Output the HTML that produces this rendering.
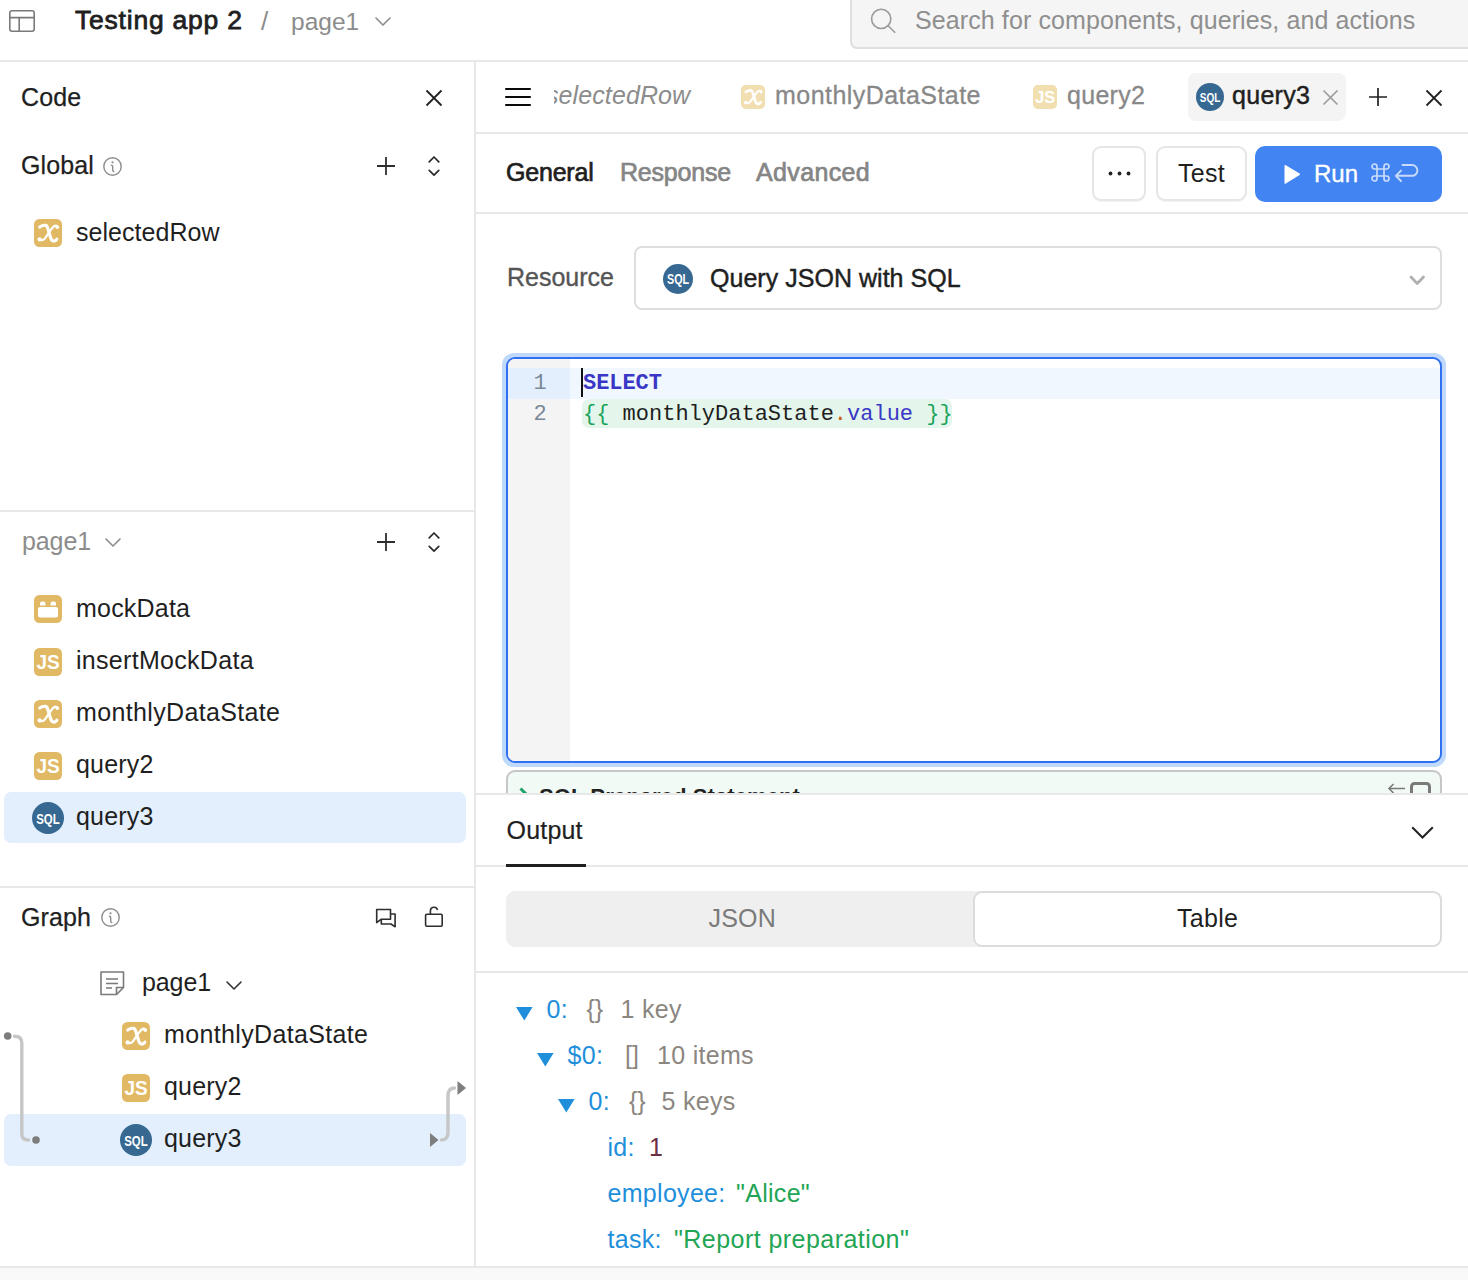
<!DOCTYPE html>
<html><head><meta charset="utf-8">
<style>
*{box-sizing:border-box;margin:0;padding:0}
html,body{width:1468px;height:1280px;overflow:hidden;background:#fff;font-family:"Liberation Sans",sans-serif;color:#1f1f1f}
.a{position:absolute;white-space:nowrap}
svg{position:absolute;overflow:visible}
</style></head>
<body>
<svg style="left:9px;top:10px;" width="26" height="22" viewBox="0 0 26 22"><rect x="0.8" y="0.8" width="24.4" height="20.4" rx="2.2" fill="none" stroke="#7a7a7a" stroke-width="1.6"/><path d="M1 7.6H25M10.2 7.6V21" stroke="#7a7a7a" stroke-width="1.6" fill="none"/></svg>
<div class="a" style="left:75px;top:4.31px;font-size:26.5px;line-height:33px;font-weight:400;color:#1f1f1f;letter-spacing:0.78px;font-family:'Liberation Sans',sans-serif;-webkit-text-stroke:0.8px #1f1f1f">Testing app 2</div>
<div class="a" style="left:261px;top:4.99px;font-size:26px;line-height:32px;font-weight:400;color:#8c8c8c;letter-spacing:0px;font-family:'Liberation Sans',sans-serif;">/</div>
<div class="a" style="left:291px;top:6.01px;font-size:24.5px;line-height:31px;font-weight:400;color:#8c8c8c;letter-spacing:0px;font-family:'Liberation Sans',sans-serif;">page1</div>
<svg style="left:375px;top:17px;" width="16" height="9" viewBox="0 0 16 9"><path d="M1 1L8.0 8L15 1" fill="none" stroke="#8c8c8c" stroke-width="1.6" stroke-linecap="round" stroke-linejoin="round"/></svg>
<div class="a" style="left:850px;top:-10px;width:640px;height:59px;background:#f5f5f5;border:2px solid #dfdfdf;border-radius:7px"></div>
<svg style="left:870px;top:7px;" width="28" height="28" viewBox="0 0 28 28"><circle cx="11.2" cy="11.9" r="9.6" fill="none" stroke="#9b9b9b" stroke-width="1.6"/><path d="M18.2 18.8L25.2 25.8" stroke="#9b9b9b" stroke-width="1.6"/></svg>
<div class="a" style="left:915px;top:4.83px;font-size:25px;line-height:31px;font-weight:400;color:#8f8f8f;letter-spacing:0.1px;font-family:'Liberation Sans',sans-serif;">Search for components, queries, and actions</div>
<div class="a" style="left:0px;top:60px;width:1468px;height:2px;background:#e8e8e8;"></div>
<div class="a" style="left:474px;top:62px;width:2px;height:1204px;background:#e8e8e8;"></div>
<div class="a" style="left:21px;top:81.83px;font-size:25px;line-height:31px;font-weight:400;color:#1f1f1f;letter-spacing:0.1px;font-family:'Liberation Sans',sans-serif;-webkit-text-stroke:0.25px #1f1f1f">Code</div>
<svg style="left:426.0px;top:90.0px;" width="16" height="16" viewBox="0 0 16 16"><path d="M0.5 0.5L15.5 15.5M15.5 0.5L0.5 15.5" stroke="#222" stroke-width="1.8"/></svg>
<div class="a" style="left:21px;top:149.83px;font-size:25px;line-height:31px;font-weight:400;color:#1f1f1f;letter-spacing:0.1px;font-family:'Liberation Sans',sans-serif;-webkit-text-stroke:0.25px #1f1f1f">Global</div>
<svg style="left:103.0px;top:156.5px;" width="19" height="19" viewBox="0 0 19 19"><circle cx="9.5" cy="9.5" r="8.7" fill="none" stroke="#8c8c8c" stroke-width="1.4"/><path d="M7.8 8.1Q9.7 7.9 9.7 10.1V13.1Q9.7 14.7 11.3 14.7" fill="none" stroke="#8c8c8c" stroke-width="1.4"/><circle cx="9.5" cy="5.3" r="1.1" fill="#8c8c8c"/></svg>
<svg style="left:377.0px;top:157.0px;" width="18" height="18" viewBox="0 0 18 18"><path d="M9.0 0V18M0 9.0H18" stroke="#2e2e2e" stroke-width="1.8"/></svg>
<svg style="left:428px;top:156px;" width="12" height="20" viewBox="0 0 12 20"><path d="M1.2 5.8L6 1L10.8 5.8M1.2 14.4L6 19.2L10.8 14.4" fill="none" stroke="#2a2a2a" stroke-width="1.7" stroke-linecap="round" stroke-linejoin="round"/></svg>
<svg style="left:34px;top:219px;" width="28" height="28" viewBox="0 0 28 28"><g transform="scale(1.0)"><rect width="28" height="28" rx="5.5" fill="#e1b964"/><path d="M5.8 8Q8.6 6 11.6 6.3Q13.1 6.7 13.9 9.6L16.6 18.6Q17.6 22.4 20.6 22Q22 21.6 22.8 20.2" fill="none" stroke="#fff" stroke-width="3.2" stroke-linecap="round" stroke-linejoin="round"/><path d="M23.6 7.6Q22 5.6 19.8 7.4Q18.4 8.6 16.6 11.2L11 19.4Q9.2 21.8 5.6 21" fill="none" stroke="#fff" stroke-width="2.3" stroke-linecap="round"/><circle cx="23.3" cy="8.2" r="1.8" fill="#fff"/><circle cx="5.6" cy="20.4" r="2.1" fill="#fff"/></g></svg>
<div class="a" style="left:76px;top:216.83px;font-size:25px;line-height:31px;font-weight:400;color:#1f1f1f;letter-spacing:0.05px;font-family:'Liberation Sans',sans-serif;">selectedRow</div>
<div class="a" style="left:0px;top:510px;width:474px;height:2px;background:#e8e8e8;"></div>
<div class="a" style="left:22px;top:525.83px;font-size:25px;line-height:31px;font-weight:400;color:#8c8c8c;letter-spacing:-0.1px;font-family:'Liberation Sans',sans-serif;">page1</div>
<svg style="left:105px;top:538px;" width="16" height="9" viewBox="0 0 16 9"><path d="M1 1L8.0 8L15 1" fill="none" stroke="#8c8c8c" stroke-width="1.6" stroke-linecap="round" stroke-linejoin="round"/></svg>
<svg style="left:377.0px;top:533.0px;" width="18" height="18" viewBox="0 0 18 18"><path d="M9.0 0V18M0 9.0H18" stroke="#2e2e2e" stroke-width="1.8"/></svg>
<svg style="left:428px;top:532px;" width="12" height="20" viewBox="0 0 12 20"><path d="M1.2 5.8L6 1L10.8 5.8M1.2 14.4L6 19.2L10.8 14.4" fill="none" stroke="#2a2a2a" stroke-width="1.7" stroke-linecap="round" stroke-linejoin="round"/></svg>
<svg style="left:34px;top:595px;" width="28" height="28" viewBox="0 0 28 28"><rect width="28" height="28" rx="5.5" fill="#e1b964"/><rect x="4" y="12" width="20" height="10.5" rx="2" fill="#fff"/><path d="M6 10.5V8.5A2 2 0 0 1 8 6.5H9.5A2 2 0 0 1 11.5 8.5V10.5Z M16.5 10.5V8.5A2 2 0 0 1 18.5 6.5H20A2 2 0 0 1 22 8.5V10.5Z" fill="#fff"/></svg>
<div class="a" style="left:76px;top:592.83px;font-size:25px;line-height:31px;font-weight:400;color:#1f1f1f;letter-spacing:0.2px;font-family:'Liberation Sans',sans-serif;">mockData</div>
<svg style="left:34px;top:648px;" width="28" height="28" viewBox="0 0 28 28"><g transform="scale(1.0)"><rect width="28" height="28" rx="5.5" fill="#e1b964"/><text x="14.1" y="20.8" text-anchor="middle" font-family="Liberation Sans" font-weight="bold" font-size="19.5" fill="#fff" textLength="23.2" lengthAdjust="spacingAndGlyphs">JS</text></g></svg>
<div class="a" style="left:76px;top:644.83px;font-size:25px;line-height:31px;font-weight:400;color:#1f1f1f;letter-spacing:0.3px;font-family:'Liberation Sans',sans-serif;">insertMockData</div>
<svg style="left:34px;top:700px;" width="28" height="28" viewBox="0 0 28 28"><g transform="scale(1.0)"><rect width="28" height="28" rx="5.5" fill="#e1b964"/><path d="M5.8 8Q8.6 6 11.6 6.3Q13.1 6.7 13.9 9.6L16.6 18.6Q17.6 22.4 20.6 22Q22 21.6 22.8 20.2" fill="none" stroke="#fff" stroke-width="3.2" stroke-linecap="round" stroke-linejoin="round"/><path d="M23.6 7.6Q22 5.6 19.8 7.4Q18.4 8.6 16.6 11.2L11 19.4Q9.2 21.8 5.6 21" fill="none" stroke="#fff" stroke-width="2.3" stroke-linecap="round"/><circle cx="23.3" cy="8.2" r="1.8" fill="#fff"/><circle cx="5.6" cy="20.4" r="2.1" fill="#fff"/></g></svg>
<div class="a" style="left:76px;top:697.33px;font-size:25px;line-height:31px;font-weight:400;color:#1f1f1f;letter-spacing:0.35px;font-family:'Liberation Sans',sans-serif;">monthlyDataState</div>
<svg style="left:34px;top:752px;" width="28" height="28" viewBox="0 0 28 28"><g transform="scale(1.0)"><rect width="28" height="28" rx="5.5" fill="#e1b964"/><text x="14.1" y="20.8" text-anchor="middle" font-family="Liberation Sans" font-weight="bold" font-size="19.5" fill="#fff" textLength="23.2" lengthAdjust="spacingAndGlyphs">JS</text></g></svg>
<div class="a" style="left:76px;top:748.83px;font-size:25px;line-height:31px;font-weight:400;color:#1f1f1f;letter-spacing:0.2px;font-family:'Liberation Sans',sans-serif;">query2</div>
<div class="a" style="left:4px;top:792px;width:462px;height:51px;background:#e3effd;border-radius:7px"></div>
<svg style="left:32.0px;top:802.0px;" width="32" height="32" viewBox="0 0 32 32"><g transform="scale(1.0)"><circle cx="16" cy="16" r="16" fill="#376892"/><text x="16" y="21.6" text-anchor="middle" font-family="Liberation Sans" font-weight="bold" font-size="15.5" fill="#fff" textLength="23.5" lengthAdjust="spacingAndGlyphs">SQL</text></g></svg>
<div class="a" style="left:76px;top:801.33px;font-size:25px;line-height:31px;font-weight:400;color:#1f1f1f;letter-spacing:0.2px;font-family:'Liberation Sans',sans-serif;">query3</div>
<div class="a" style="left:0px;top:886px;width:474px;height:2px;background:#e8e8e8;"></div>
<div class="a" style="left:21px;top:901.83px;font-size:25px;line-height:31px;font-weight:400;color:#1f1f1f;letter-spacing:0.1px;font-family:'Liberation Sans',sans-serif;-webkit-text-stroke:0.25px #1f1f1f">Graph</div>
<svg style="left:100.5px;top:908.0px;" width="19" height="19" viewBox="0 0 19 19"><circle cx="9.5" cy="9.5" r="8.7" fill="none" stroke="#8c8c8c" stroke-width="1.4"/><path d="M7.8 8.1Q9.7 7.9 9.7 10.1V13.1Q9.7 14.7 11.3 14.7" fill="none" stroke="#8c8c8c" stroke-width="1.4"/><circle cx="9.5" cy="5.3" r="1.1" fill="#8c8c8c"/></svg>
<svg style="left:370px;top:900px;" width="30" height="30" viewBox="0 0 30 30"><path d="M6.7 9.5H20.5V19.3H11L6.7 22.6Z" fill="none" stroke="#2e2e2e" stroke-width="1.6" stroke-linejoin="round"/><path d="M20.5 14H25.1V26.8L21 24H11.3V19.3" fill="none" stroke="#2e2e2e" stroke-width="1.6" stroke-linejoin="round"/></svg>
<svg style="left:420px;top:900px;" width="30" height="30" viewBox="0 0 30 30"><rect x="5.6" y="14.2" width="16.6" height="12" rx="1.2" fill="none" stroke="#2e2e2e" stroke-width="1.6"/><path d="M10.4 14.2V10.8A3.6 3.6 0 0 1 17.5 10" fill="none" stroke="#2e2e2e" stroke-width="1.6"/></svg>
<svg style="left:100px;top:971px;" width="25" height="25" viewBox="0 0 25 25"><path d="M1 1H23.5V16.5L16.5 23.5H1Z" fill="none" stroke="#7a7a7a" stroke-width="1.6" stroke-linejoin="round"/><path d="M16.5 23.5V16.5H23.5" fill="none" stroke="#7a7a7a" stroke-width="1.6"/><path d="M6 8H18M6 12.5H18M6 17H12" stroke="#7a7a7a" stroke-width="1.5"/></svg>
<div class="a" style="left:142px;top:967.33px;font-size:25px;line-height:31px;font-weight:400;color:#1f1f1f;letter-spacing:-0.1px;font-family:'Liberation Sans',sans-serif;">page1</div>
<svg style="left:226px;top:981px;" width="16" height="9" viewBox="0 0 16 9"><path d="M1 1L8.0 8L15 1" fill="none" stroke="#333" stroke-width="1.6" stroke-linecap="round" stroke-linejoin="round"/></svg>
<svg style="left:122px;top:1022px;" width="28" height="28" viewBox="0 0 28 28"><g transform="scale(1.0)"><rect width="28" height="28" rx="5.5" fill="#e1b964"/><path d="M5.8 8Q8.6 6 11.6 6.3Q13.1 6.7 13.9 9.6L16.6 18.6Q17.6 22.4 20.6 22Q22 21.6 22.8 20.2" fill="none" stroke="#fff" stroke-width="3.2" stroke-linecap="round" stroke-linejoin="round"/><path d="M23.6 7.6Q22 5.6 19.8 7.4Q18.4 8.6 16.6 11.2L11 19.4Q9.2 21.8 5.6 21" fill="none" stroke="#fff" stroke-width="2.3" stroke-linecap="round"/><circle cx="23.3" cy="8.2" r="1.8" fill="#fff"/><circle cx="5.6" cy="20.4" r="2.1" fill="#fff"/></g></svg>
<div class="a" style="left:164px;top:1019.33px;font-size:25px;line-height:31px;font-weight:400;color:#1f1f1f;letter-spacing:0.35px;font-family:'Liberation Sans',sans-serif;">monthlyDataState</div>
<svg style="left:122px;top:1074px;" width="28" height="28" viewBox="0 0 28 28"><g transform="scale(1.0)"><rect width="28" height="28" rx="5.5" fill="#e1b964"/><text x="14.1" y="20.8" text-anchor="middle" font-family="Liberation Sans" font-weight="bold" font-size="19.5" fill="#fff" textLength="23.2" lengthAdjust="spacingAndGlyphs">JS</text></g></svg>
<div class="a" style="left:164px;top:1070.83px;font-size:25px;line-height:31px;font-weight:400;color:#1f1f1f;letter-spacing:0.2px;font-family:'Liberation Sans',sans-serif;">query2</div>
<div class="a" style="left:4px;top:1114px;width:462px;height:52px;background:#e3effd;border-radius:7px"></div>
<svg style="left:120.0px;top:1124.0px;" width="32" height="32" viewBox="0 0 32 32"><g transform="scale(1.0)"><circle cx="16" cy="16" r="16" fill="#376892"/><text x="16" y="21.6" text-anchor="middle" font-family="Liberation Sans" font-weight="bold" font-size="15.5" fill="#fff" textLength="23.5" lengthAdjust="spacingAndGlyphs">SQL</text></g></svg>
<div class="a" style="left:164px;top:1122.83px;font-size:25px;line-height:31px;font-weight:400;color:#1f1f1f;letter-spacing:0.2px;font-family:'Liberation Sans',sans-serif;">query3</div>
<svg style="left:0px;top:1028px;" width="50" height="120" viewBox="0 0 50 120"><circle cx="7.7" cy="8" r="3.8" fill="#7d7d7d"/><path d="M14.5 8.3Q21.8 8.3 21.8 15V106Q21.8 112 28.5 112" fill="none" stroke="#c6c6c6" stroke-width="3.4" stroke-linecap="round"/><circle cx="36" cy="112" r="3.8" fill="#7d7d7d"/></svg>
<svg style="left:428px;top:1078px;" width="40" height="72" viewBox="0 0 40 72"><path d="M457.5 1081L466 1088L457.5 1095Z" transform="translate(-428 -1078)" fill="#7d7d7d"/><path d="M430 1133L438.5 1140L430 1147Z" transform="translate(-428 -1078)" fill="#7d7d7d"/><path d="M454.5 1088Q448 1088 448 1096V1132Q448 1140 441.5 1140" transform="translate(-428 -1078)" fill="none" stroke="#c6c6c6" stroke-width="3.4" stroke-linecap="round"/></svg>
<div class="a" style="left:0px;top:1266px;width:1468px;height:2px;background:#e8e8e8;"></div>
<div class="a" style="left:0px;top:1268px;width:1468px;height:12px;background:#f9f9f9;"></div>
<svg style="left:506px;top:87px;" width="24" height="20" viewBox="0 0 24 20"><path d="M0 2H24M0 10H24M0 18H24" stroke="#0a0a0a" stroke-width="2.1" stroke-linecap="round"/></svg>
<div class="a" style="left:554px;top:62px;width:160px;height:70px;overflow:hidden">
<div class="a" style="left:-8px;top:17.63px;font-size:25px;line-height:31px;font-weight:400;color:#8c8c8c;letter-spacing:0.1px;font-family:'Liberation Sans',sans-serif;font-style:italic">selectedRow</div>
</div>
<svg style="left:741px;top:85px;" width="24" height="24" viewBox="0 0 24 24"><g transform="scale(0.8571428571428571)"><rect width="28" height="28" rx="5.5" fill="#f1dfb2"/><path d="M5.8 8Q8.6 6 11.6 6.3Q13.1 6.7 13.9 9.6L16.6 18.6Q17.6 22.4 20.6 22Q22 21.6 22.8 20.2" fill="none" stroke="#fff" stroke-width="3.2" stroke-linecap="round" stroke-linejoin="round"/><path d="M23.6 7.6Q22 5.6 19.8 7.4Q18.4 8.6 16.6 11.2L11 19.4Q9.2 21.8 5.6 21" fill="none" stroke="#fff" stroke-width="2.3" stroke-linecap="round"/><circle cx="23.3" cy="8.2" r="1.8" fill="#fff"/><circle cx="5.6" cy="20.4" r="2.1" fill="#fff"/></g></svg>
<div class="a" style="left:775px;top:80.33px;font-size:25px;line-height:31px;font-weight:400;color:#888;letter-spacing:0.45px;font-family:'Liberation Sans',sans-serif;-webkit-text-stroke:0.3px #888">monthlyDataState</div>
<svg style="left:1033px;top:85px;" width="24" height="24" viewBox="0 0 24 24"><g transform="scale(0.8571428571428571)"><rect width="28" height="28" rx="5.5" fill="#f1dfb2"/><text x="14.1" y="20.8" text-anchor="middle" font-family="Liberation Sans" font-weight="bold" font-size="19.5" fill="#fff" textLength="23.2" lengthAdjust="spacingAndGlyphs">JS</text></g></svg>
<div class="a" style="left:1067px;top:80.33px;font-size:25px;line-height:31px;font-weight:400;color:#888;letter-spacing:0.3px;font-family:'Liberation Sans',sans-serif;-webkit-text-stroke:0.3px #888">query2</div>
<div class="a" style="left:1188px;top:73px;width:158px;height:48px;background:#f4f4f4;border-radius:8px"></div>
<svg style="left:1196.0px;top:83.0px;" width="28" height="28" viewBox="0 0 28 28"><g transform="scale(0.875)"><circle cx="16" cy="16" r="16" fill="#376892"/><text x="16" y="21.6" text-anchor="middle" font-family="Liberation Sans" font-weight="bold" font-size="15.5" fill="#fff" textLength="23.5" lengthAdjust="spacingAndGlyphs">SQL</text></g></svg>
<div class="a" style="left:1232px;top:80.33px;font-size:25px;line-height:31px;font-weight:400;color:#1f1f1f;letter-spacing:0.3px;font-family:'Liberation Sans',sans-serif;-webkit-text-stroke:0.45px #1f1f1f">query3</div>
<svg style="left:1322.5px;top:90.0px;" width="15" height="15" viewBox="0 0 15 15"><path d="M0.5 0.5L14.5 14.5M14.5 0.5L0.5 14.5" stroke="#9a9a9a" stroke-width="1.6"/></svg>
<svg style="left:1369.0px;top:88.0px;" width="18" height="18" viewBox="0 0 18 18"><path d="M9.0 0V18M0 9.0H18" stroke="#222" stroke-width="1.7"/></svg>
<svg style="left:1426.0px;top:89.5px;" width="16" height="16" viewBox="0 0 16 16"><path d="M0.5 0.5L15.5 15.5M15.5 0.5L0.5 15.5" stroke="#222" stroke-width="1.8"/></svg>
<div class="a" style="left:476px;top:132px;width:992px;height:2px;background:#e8e8e8;"></div>
<div class="a" style="left:506px;top:156.83px;font-size:25px;line-height:31px;font-weight:400;color:#1f1f1f;letter-spacing:-0.2px;font-family:'Liberation Sans',sans-serif;-webkit-text-stroke:0.7px #1f1f1f">General</div>
<div class="a" style="left:620px;top:156.83px;font-size:25px;line-height:31px;font-weight:400;color:#858585;letter-spacing:-0.2px;font-family:'Liberation Sans',sans-serif;-webkit-text-stroke:0.7px #858585">Response</div>
<div class="a" style="left:756px;top:156.83px;font-size:25px;line-height:31px;font-weight:400;color:#858585;letter-spacing:0.35px;font-family:'Liberation Sans',sans-serif;-webkit-text-stroke:0.7px #858585">Advanced</div>
<div class="a" style="left:1092px;top:146px;width:54px;height:55px;background:#fff;border:2px solid #e6e6e6;border-radius:9px;box-shadow:0 1px 1px rgba(0,0,0,0.05)"></div>
<svg style="left:1108px;top:171px;" width="24" height="5" viewBox="0 0 24 5"><circle cx="2.5" cy="2.5" r="1.9" fill="#222"/><circle cx="11.5" cy="2.5" r="1.9" fill="#222"/><circle cx="20.5" cy="2.5" r="1.9" fill="#222"/></svg>
<div class="a" style="left:1156px;top:146px;width:91px;height:55px;background:#fff;border:2px solid #e6e6e6;border-radius:9px;box-shadow:0 1px 1px rgba(0,0,0,0.05)"></div>
<div class="a" style="left:1178px;top:157.83px;font-size:25px;line-height:31px;font-weight:400;color:#1f1f1f;letter-spacing:0.3px;font-family:'Liberation Sans',sans-serif;">Test</div>
<div class="a" style="left:1255px;top:146px;width:187px;height:56px;background:#4285f2;border-radius:10px"></div>
<svg style="left:1283px;top:164px;" width="18" height="21" viewBox="0 0 18 21"><path d="M1.5 1.8Q1.5 0.5 2.8 1.2L16.6 9.4Q17.6 10.2 16.6 11L2.8 19.6Q1.5 20.3 1.5 19Z" fill="#fff"/></svg>
<div class="a" style="left:1314px;top:158.68px;font-size:24px;line-height:30px;font-weight:400;color:#fff;letter-spacing:0px;font-family:'Liberation Sans',sans-serif;-webkit-text-stroke:0.35px #fff">Run</div>
<svg style="left:1371px;top:163px;" width="19" height="19" viewBox="0 0 19 19"><path d="M6 6H13V13H6ZM6 6V3.5A2.5 2.5 0 1 0 3.5 6H6M13 6V3.5A2.5 2.5 0 1 1 15.5 6H13M13 13V15.5A2.5 2.5 0 1 0 15.5 13H13M6 13V15.5A2.5 2.5 0 1 1 3.5 13H6" fill="none" stroke="#c9dbfb" stroke-width="1.7"/></svg>
<svg style="left:1393px;top:162px;" width="28" height="24" viewBox="0 0 28 24"><path d="M3 13.8H19A5.4 5.4 0 0 0 19 3H9.5M8 8.6L2.8 13.8L8 19" fill="none" stroke="#c9dbfb" stroke-width="1.9" stroke-linecap="round" stroke-linejoin="round"/></svg>
<div class="a" style="left:476px;top:212px;width:992px;height:2px;background:#e8e8e8;"></div>
<div class="a" style="left:507px;top:261.83px;font-size:25px;line-height:31px;font-weight:400;color:#555;letter-spacing:0px;font-family:'Liberation Sans',sans-serif;-webkit-text-stroke:0.35px #555">Resource</div>
<div class="a" style="left:634px;top:246px;width:808px;height:64px;background:#fff;border:2px solid #dedede;border-radius:8px"></div>
<svg style="left:663.0px;top:264.0px;" width="30" height="30" viewBox="0 0 30 30"><g transform="scale(0.9375)"><circle cx="16" cy="16" r="16" fill="#376892"/><text x="16" y="21.6" text-anchor="middle" font-family="Liberation Sans" font-weight="bold" font-size="15.5" fill="#fff" textLength="23.5" lengthAdjust="spacingAndGlyphs">SQL</text></g></svg>
<div class="a" style="left:710px;top:262.83px;font-size:25px;line-height:31px;font-weight:400;color:#1f1f1f;letter-spacing:0.03px;font-family:'Liberation Sans',sans-serif;-webkit-text-stroke:0.45px #1f1f1f">Query JSON with SQL</div>
<svg style="left:1409.5px;top:276px;" width="14.5" height="8.5" viewBox="0 0 14.5 8.5"><path d="M1 1L7.25 7.5L13.5 1" fill="none" stroke="#b0b0b0" stroke-width="2.8" stroke-linecap="round" stroke-linejoin="round"/></svg>
<div class="a" style="left:502px;top:353px;width:944px;height:414px;background:#bfd9fb;border-radius:12px"></div>
<div class="a" style="left:506px;top:357px;width:936px;height:406px;background:#fff;border:2px solid #2f6ff0;border-radius:9px;overflow:hidden"></div>
<div class="a" style="left:508px;top:359px;width:62px;height:402px;background:#f4f4f4;border-bottom-left-radius:7px;border-top-left-radius:7px"></div>
<div class="a" style="left:508px;top:368px;width:62px;height:31px;background:#e3effd;"></div>
<div class="a" style="left:570px;top:368px;width:870px;height:31px;background:#f0f7fe;"></div>
<div class="a" style="left:533.5px;top:370.15px;font-size:22px;line-height:28px;font-weight:400;color:#7a8898;letter-spacing:0px;font-family:'Liberation Mono',sans-serif;">1</div>
<div class="a" style="left:533.5px;top:401.15px;font-size:22px;line-height:28px;font-weight:400;color:#7a8898;letter-spacing:0px;font-family:'Liberation Mono',sans-serif;">2</div>
<div class="a" style="left:581px;top:368px;width:2px;height:29px;background:#111;"></div>
<div class="a" style="left:583px;top:370.15px;font-size:22px;line-height:28px;font-weight:700;color:#3a37c6;letter-spacing:-0.05px;font-family:'Liberation Mono',sans-serif;">SELECT</div>
<div class="a" style="left:582px;top:399px;width:370px;height:29px;background:#e4f6eb;border-radius:7px"></div>
<div class="a" style="left:583px;top:401.15px;font-size:22px;line-height:28px;font-weight:400;color:#1f1f1f;letter-spacing:0px;font-family:'Liberation Mono',sans-serif;"><span style="color:#1ba35a">{{</span> monthlyDataState<span style="color:#c55a11">.</span><span style="color:#3a37c6">value</span> <span style="color:#1ba35a">}}</span></div>
<div class="a" style="left:476px;top:760px;width:992px;height:33px;overflow:hidden">
<div class="a" style="left:30px;top:10px;width:936px;height:60px;background:#f2faf5;border:2px solid #c6c6c6;border-radius:9px"></div>
<svg style="left:43px;top:27px;" width="10" height="16" viewBox="0 0 10 16"><path d="M1.5 1.5L8 8L1.5 14.5" fill="none" stroke="#22a06b" stroke-width="3"/></svg>
<div class="a" style="left:63px;top:23.10px;font-size:22.2px;line-height:28px;font-weight:700;color:#222;letter-spacing:0px;font-family:'Liberation Sans',sans-serif;">SQL Prepared Statement</div>
<svg style="left:911px;top:17px;" width="50" height="30" viewBox="0 0 50 30"><path d="M2 11.5H18M6.5 7L2 11.5L6.5 16" fill="none" stroke="#7a7a7a" stroke-width="1.6"/><rect x="24.5" y="6.5" width="18" height="16" rx="3" fill="none" stroke="#7a7a7a" stroke-width="3"/><path d="M28 4.5H41A3 3 0 0 1 44 7.5V10" fill="none" stroke="#7a7a7a" stroke-width="0"/></svg>
</div>
<div class="a" style="left:476px;top:793px;width:992px;height:2px;background:#e8e8e8;"></div>
<div class="a" style="left:506.5px;top:814.83px;font-size:25px;line-height:31px;font-weight:400;color:#1f1f1f;letter-spacing:0.2px;font-family:'Liberation Sans',sans-serif;-webkit-text-stroke:0.2px #1f1f1f">Output</div>
<svg style="left:1411px;top:826px;" width="23" height="13" viewBox="0 0 23 13"><path d="M1.2 1.2L11.5 11.5L21.8 1.2" fill="none" stroke="#222" stroke-width="2"/></svg>
<div class="a" style="left:476px;top:865px;width:992px;height:2px;background:#e8e8e8;"></div>
<div class="a" style="left:506px;top:864px;width:80px;height:3px;background:#1f1f1f;"></div>
<div class="a" style="left:506px;top:891px;width:936px;height:56px;background:#efefef;border-radius:9px"></div>
<div class="a" style="left:708.5px;top:902.83px;font-size:25px;line-height:31px;font-weight:400;color:#7a7a7a;letter-spacing:0.2px;font-family:'Liberation Sans',sans-serif;">JSON</div>
<div class="a" style="left:973px;top:891px;width:469px;height:56px;background:#fff;border:2px solid #dcdcdc;border-radius:9px"></div>
<div class="a" style="left:1177px;top:902.83px;font-size:25px;line-height:31px;font-weight:400;color:#1f1f1f;letter-spacing:0.3px;font-family:'Liberation Sans',sans-serif;">Table</div>
<div class="a" style="left:476px;top:971px;width:992px;height:2px;background:#e8e8e8;"></div>
<svg style="left:516px;top:1007px;" width="17" height="14" viewBox="0 0 17 14"><path d="M0 0H16.6L8.3 13.6Z" fill="#1f8fdb"/></svg>
<div class="a" style="left:546.5px;top:994.43px;font-size:25px;line-height:31px;font-weight:400;color:#1f8fdb;letter-spacing:0.3px;font-family:'Liberation Sans',sans-serif;">0:</div>
<div class="a" style="left:586.5px;top:994.43px;font-size:25px;line-height:31px;font-weight:400;color:#8b8680;letter-spacing:0px;font-family:'Liberation Sans',sans-serif;">{}</div>
<div class="a" style="left:620.5px;top:994.43px;font-size:25px;line-height:31px;font-weight:400;color:#8b8680;letter-spacing:0.3px;font-family:'Liberation Sans',sans-serif;">1 key</div>
<svg style="left:537px;top:1053px;" width="17" height="14" viewBox="0 0 17 14"><path d="M0 0H16.6L8.3 13.6Z" fill="#1f8fdb"/></svg>
<div class="a" style="left:567.5px;top:1040.33px;font-size:25px;line-height:31px;font-weight:400;color:#1f8fdb;letter-spacing:0.3px;font-family:'Liberation Sans',sans-serif;">$0:</div>
<div class="a" style="left:625px;top:1040.33px;font-size:25px;line-height:31px;font-weight:400;color:#8b8680;letter-spacing:0px;font-family:'Liberation Sans',sans-serif;">[]</div>
<div class="a" style="left:657px;top:1040.33px;font-size:25px;line-height:31px;font-weight:400;color:#8b8680;letter-spacing:0.3px;font-family:'Liberation Sans',sans-serif;">10 items</div>
<svg style="left:558px;top:1099px;" width="17" height="14" viewBox="0 0 17 14"><path d="M0 0H16.6L8.3 13.6Z" fill="#1f8fdb"/></svg>
<div class="a" style="left:588.5px;top:1086.13px;font-size:25px;line-height:31px;font-weight:400;color:#1f8fdb;letter-spacing:0.3px;font-family:'Liberation Sans',sans-serif;">0:</div>
<div class="a" style="left:629px;top:1086.13px;font-size:25px;line-height:31px;font-weight:400;color:#8b8680;letter-spacing:0px;font-family:'Liberation Sans',sans-serif;">{}</div>
<div class="a" style="left:661.5px;top:1086.13px;font-size:25px;line-height:31px;font-weight:400;color:#8b8680;letter-spacing:0.3px;font-family:'Liberation Sans',sans-serif;">5 keys</div>
<div class="a" style="left:607.5px;top:1132.33px;font-size:25px;line-height:31px;font-weight:400;color:#1f8fdb;letter-spacing:0.3px;font-family:'Liberation Sans',sans-serif;">id:</div>
<div class="a" style="left:649px;top:1132.33px;font-size:25px;line-height:31px;font-weight:400;color:#6d2f45;letter-spacing:0px;font-family:'Liberation Sans',sans-serif;">1</div>
<div class="a" style="left:607.5px;top:1178.33px;font-size:25px;line-height:31px;font-weight:400;color:#1f8fdb;letter-spacing:0.3px;font-family:'Liberation Sans',sans-serif;">employee:</div>
<div class="a" style="left:736px;top:1178.33px;font-size:25px;line-height:31px;font-weight:400;color:#22a554;letter-spacing:0.3px;font-family:'Liberation Sans',sans-serif;">"Alice"</div>
<div class="a" style="left:607.5px;top:1224.13px;font-size:25px;line-height:31px;font-weight:400;color:#1f8fdb;letter-spacing:0.3px;font-family:'Liberation Sans',sans-serif;">task:</div>
<div class="a" style="left:674px;top:1224.13px;font-size:25px;line-height:31px;font-weight:400;color:#22a554;letter-spacing:0.45px;font-family:'Liberation Sans',sans-serif;">"Report preparation"</div>
</body></html>
